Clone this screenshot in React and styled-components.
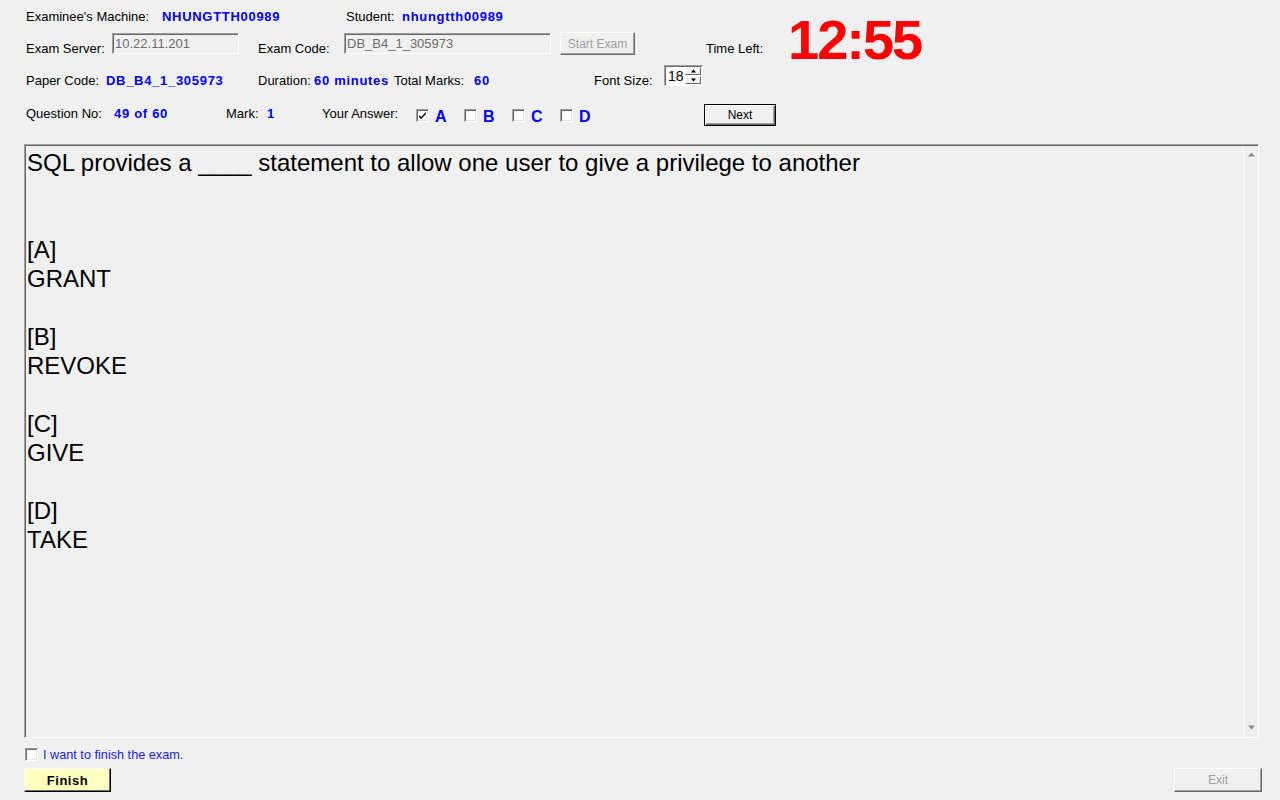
import React, { useState } from 'react';
import styled, { createGlobalStyle } from 'styled-components';

const GlobalStyle = createGlobalStyle`
  html, body {
    margin: 0;
    padding: 0;
    background: #f0f0f0;
  }
  body {
    font-family: "Liberation Sans", Arial, sans-serif;
    font-size: 13px;
    color: #000;
  }
`;

const Window = styled.div`
  width: 1280px;
  height: 800px;
  background: #f0f0f0;
  overflow: hidden;
  display: flex;
  flex-direction: column;
`;

const Row = styled.div`
  display: flex;
  align-items: center;
  height: ${(p) => p.$h}px;
  padding-left: 26px;
`;

const Label = styled.span`
  flex: none;
  width: ${(p) => (p.$w ? `${p.$w}px` : 'auto')};
  margin-left: ${(p) => p.$ml || 0}px;
  font-size: 13px;
  white-space: nowrap;
`;

const Value = styled.span`
  flex: none;
  width: ${(p) => (p.$w ? `${p.$w}px` : 'auto')};
  font-size: 13px;
  font-weight: bold;
  letter-spacing: 0.7px;
  color: #0000ff;
  white-space: nowrap;
`;

const Field = styled.div`
  flex: none;
  box-sizing: border-box;
  width: ${(p) => p.$w}px;
  height: 21px;
  margin-top: -9px;
  padding: 2px 0 0 2px;
  border: 1px solid;
  border-color: #a0a0a0 #ffffff #ffffff #a0a0a0;
  box-shadow: inset 1px 1px 0 #696969;
  color: #6d6d6d;
  font-size: 13px;
  line-height: 15px;
`;

const WinButton = styled.button`
  flex: none;
  box-sizing: border-box;
  width: ${(p) => p.$w}px;
  height: ${(p) => p.$h || 23}px;
  margin-left: ${(p) => p.$ml || 0}px;
  margin-top: ${(p) => p.$mt || 0}px;
  padding: 0;
  background: #f0f0f0;
  border: 1px solid;
  border-color: #ffffff #696969 #696969 #ffffff;
  box-shadow: inset -1px -1px 0 #a0a0a0;
  font-family: "Liberation Sans", Arial, sans-serif;
  font-size: 12px;
  color: ${(p) => (p.disabled ? '#a0a0a0' : '#000')};
`;

const DefaultButton = styled(WinButton)`
  border: 1px solid #000;
  box-shadow: inset 1px 1px 0 #ffffff, inset -1px -1px 0 #696969, inset -2px -2px 0 #a0a0a0;
`;

const FinishButton = styled(WinButton)`
  background: #ffffc0;
  border-color: #ffffff #000000 #000000 #ffffff;
  box-shadow: inset -1px -1px 0 #696969;
  font-size: 13px;
  font-weight: bold;
  letter-spacing: 0.5px;
`;

const Timer = styled.div`
  flex: none;
  height: 32px;
  line-height: 32px;
  margin-top: -17px;
  font-size: 56px;
  font-weight: bold;
  letter-spacing: -2px;
  color: #ff0000;
`;

const Spinner = styled.div`
  flex: none;
  display: flex;
  box-sizing: border-box;
  width: 39px;
  height: 21px;
  margin-top: -9px;
  background: #ffffff;
  border: 1px solid;
  border-color: #a0a0a0 #ffffff #ffffff #a0a0a0;
  box-shadow: inset 1px 1px 0 #696969;
`;

const SpinValue = styled.span`
  flex: 1;
  padding: 2px 0 0 3px;
  font-size: 14px;
  line-height: 16px;
`;

const SpinButtons = styled.div`
  display: flex;
  flex-direction: column;
  width: 16px;
  padding: 1px 1px 1px 0;
  gap: 1px;
`;

const SpinButton = styled.div`
  flex: 1;
  display: flex;
  align-items: center;
  justify-content: center;
  background: #f0f0f0;
  border: 1px solid;
  border-color: #ffffff #696969 #696969 #ffffff;
`;

const Choices = styled.div`
  display: flex;
  align-items: center;
  margin-top: 5px;
`;

const Choice = styled.label`
  display: flex;
  align-items: center;
  width: 48px;
  gap: 6px;
`;

const Box = styled.span`
  flex: none;
  display: inline-flex;
  align-items: center;
  justify-content: center;
  box-sizing: border-box;
  width: 13px;
  height: 13px;
  background: #ffffff;
  border: 1px solid;
  border-color: #a0a0a0 #ffffff #ffffff #a0a0a0;
  box-shadow: inset 1px 1px 0 #696969, inset -1px -1px 0 #e3e3e3;
`;

const Letter = styled.span`
  padding-top: 2px;
  font-size: 16px;
  font-weight: bold;
  color: #0000ff;
`;

const QuestionBox = styled.div`
  display: flex;
  box-sizing: border-box;
  width: 1235px;
  height: 594px;
  margin: 14px 0 0 24px;
  border: 1px solid;
  border-color: #a0a0a0 #ffffff #ffffff #a0a0a0;
  box-shadow: inset 1px 1px 0 #696969;
`;

const QuestionText = styled.div`
  flex: 1;
  padding: 3px 0 0 2px;
  font-size: 24px;
  line-height: 29px;
  white-space: pre-line;
`;

const ScrollBar = styled.div`
  flex: none;
  display: flex;
  flex-direction: column;
  justify-content: space-between;
  align-items: center;
  width: 14px;
  margin: 1px 0 0 0;
  padding: 6px 0 7px;
  background: #efefef;
  border-left: 1px solid #fafafa;
`;

const FinishRow = styled.label`
  display: flex;
  align-items: center;
  gap: 5px;
  margin: 10px 0 0 25px;
  height: 13px;
  font-size: 12.7px;
  color: #2020ff;
`;

const BottomRow = styled.div`
  display: flex;
  justify-content: space-between;
  margin: 7px 18px 0 24px;
`;

const Check = () => (
  <svg width="9" height="9" viewBox="0 0 9 9">
    <path d="M1 4 L3 6 L8 1 L8 3 L3 8 L1 6 Z" fill="#000" />
  </svg>
);

const Arrow = ({ down, size = 7, color = '#8a8a8a' }) => (
  <svg width={size} height={Math.ceil(size / 2) + 1} viewBox="0 0 7 4">
    <path d={down ? 'M0 0 H7 L3.5 4 Z' : 'M0 4 H7 L3.5 0 Z'} fill={color} />
  </svg>
);

const question = `SQL provides a ____ statement to allow one user to give a privilege to another


[A]
GRANT

[B]
REVOKE

[C]
GIVE

[D]
TAKE`;

export default function App() {
  const [answer, setAnswer] = useState('A');

  return (
    <Window>
      <GlobalStyle />
      <Row $h={32}>
        <Label $w={136}>Examinee's Machine:</Label>
        <Value $w={184}>NHUNGTTH00989</Value>
        <Label $w={56}>Student:</Label>
        <Value>nhungtth00989</Value>
      </Row>
      <Row $h={32}>
        <Label $w={86}>Exam Server:</Label>
        <Field $w={127}>10.22.11.201</Field>
        <Label $w={86} $ml={19}>Exam Code:</Label>
        <Field $w={207}>DB_B4_1_305973</Field>
        <WinButton $w={75} $ml={9} $mt={-9} disabled>Start Exam</WinButton>
        <Label $w={82} $ml={71}>Time Left:</Label>
        <Timer>12:55</Timer>
      </Row>
      <Row $h={32}>
        <Label $w={80}>Paper Code:</Label>
        <Value $w={152}>DB_B4_1_305973</Value>
        <Label $w={56}>Duration:</Label>
        <Value $w={80}>60 minutes</Value>
        <Label $w={80}>Total Marks:</Label>
        <Value $w={120}>60</Value>
        <Label $w={70}>Font Size:</Label>
        <Spinner>
          <SpinValue>18</SpinValue>
          <SpinButtons>
            <SpinButton><Arrow size={5} color="#000" /></SpinButton>
            <SpinButton><Arrow down size={5} color="#000" /></SpinButton>
          </SpinButtons>
        </Spinner>
      </Row>
      <Row $h={34}>
        <Label $w={88}>Question No:</Label>
        <Value $w={112}>49 of 60</Value>
        <Label $w={41}>Mark:</Label>
        <Value $w={55}>1</Value>
        <Label $w={94}>Your Answer:</Label>
        <Choices>
          {['A', 'B', 'C', 'D'].map((l) => (
            <Choice key={l} onClick={() => setAnswer(l)}>
              <Box>{answer === l && <Check />}</Box>
              <Letter>{l}</Letter>
            </Choice>
          ))}
        </Choices>
        <DefaultButton $w={72} $h={22} $ml={96} $mt={4}>Next</DefaultButton>
      </Row>
      <QuestionBox>
        <QuestionText>{question}</QuestionText>
        <ScrollBar>
          <Arrow />
          <Arrow down />
        </ScrollBar>
      </QuestionBox>
      <FinishRow>
        <Box />
        I want to finish the exam.
      </FinishRow>
      <BottomRow>
        <FinishButton $w={87} $h={24}>Finish</FinishButton>
        <WinButton $w={88} $h={24} disabled>Exit</WinButton>
      </BottomRow>
    </Window>
  );
}
